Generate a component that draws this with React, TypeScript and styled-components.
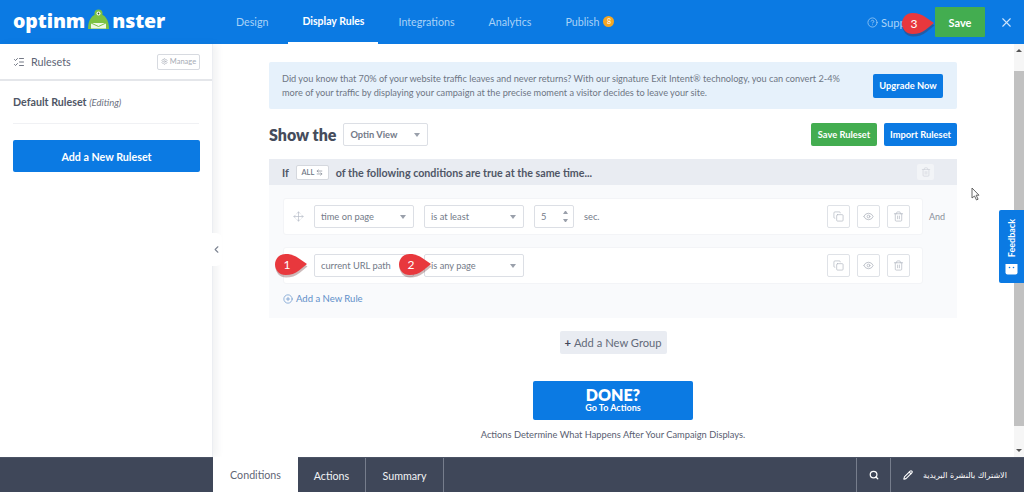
import React from 'react';
import styled, { createGlobalStyle } from 'styled-components';
import { Copy, Eye, Trash2, Move, ListChecks, Settings, ChevronLeft, X, HelpCircle, Search, Pencil, PlusCircle, ArrowLeftRight } from 'lucide-react';

const blue = '#0b7ae3';
const green = '#43ad50';
const dark = '#3f4759';
const text = '#4b5364';

const Global = createGlobalStyle`
  html, body { margin: 0; padding: 0; background: #fff; }
  * { box-sizing: border-box; }
  body { font-family: Lato, "Open Sans", sans-serif; color: ${text}; }
`;

const Page = styled.div`
  position: relative;
  width: 1024px;
  height: 492px;
  overflow: hidden;
  display: flex;
  flex-direction: column;
`;

const Header = styled.header`
  height: 44px;
  flex: none;
  background: ${blue};
  display: flex;
  align-items: stretch;
`;

const Logo = styled.div`
  width: 213px;
  padding: 0 0 2px 13px;
  display: flex;
  align-items: center;
  color: #fff;
  font: 800 19.5px/1 "Open Sans", sans-serif;
  letter-spacing: -0.1px;
`;

const MonsterSvg = styled.svg`
  flex: none;
  margin: -3px 0 0 0;
`;

const Nav = styled.nav`
  display: flex;
  align-items: stretch;
  gap: 6px;
  margin-left: 9px;
`;

const NavItem = styled.div<{ $active?: boolean }>`
  padding: 0 14px;
  display: flex;
  align-items: center;
  gap: 4px;
  font-size: ${p => (p.$active ? '10.5px' : '10.7px')};
  font-weight: ${p => (p.$active ? 700 : 400)};
  color: ${p => (p.$active ? '#fff' : '#a9d2f7')};
  border-bottom: 2px solid ${p => (p.$active ? '#fff' : 'transparent')};
`;

const Dot = styled.span`
  width: 11px;
  height: 11px;
  border-radius: 50%;
  background: #f5a623;
  color: #fff;
  font-size: 7px;
  line-height: 11px;
  text-align: center;
`;

const HeaderRight = styled.div`
  margin-left: auto;
  display: flex;
  align-items: center;
  color: #a9d2f7;
  font-size: 11.2px;
`;

const Support = styled.div`
  display: flex;
  align-items: center;
  gap: 3px;
  width: 68px;
  overflow: hidden;
`;

const SaveTop = styled.button`
  width: 50px;
  height: 30px;
  border: 0;
  padding: 0;
  background: ${green};
  color: #fff;
  font: 700 11px Lato, sans-serif;
  border-radius: 1px;
`;

const Close = styled.div`
  width: 39px;
  padding-left: 3px;
  display: flex;
  justify-content: center;
  color: #cfe5fb;
`;

const Body = styled.div`
  flex: 1;
  display: flex;
  min-height: 0;
`;

const Sidebar = styled.aside`
  width: 213px;
  flex: none;
  border-right: 1px solid #eceef2;
  box-shadow: 4px 0 7px rgba(60, 70, 90, 0.07);
  z-index: 1;
`;

const SideHead = styled.div`
  height: 37px;
  padding: 0 12px 0 13px;
  border-bottom: 2px solid #e4e6ea;
  display: flex;
  align-items: center;
  gap: 6px;
  font-size: 10.8px;
  color: #5d6474;
`;

const Manage = styled.span`
  margin-left: auto;
  width: 43px;
  height: 16px;
  border: 1px solid #d7dae0;
  border-radius: 2px;
  display: flex;
  align-items: center;
  justify-content: center;
  gap: 2px;
  font-size: 7.5px;
  color: #a7acb6;
`;

const SideBody = styled.div`
  padding: 14px 13px 0;
`;

const RulesetName = styled.div`
  box-sizing: content-box;
  height: 14px;
  padding-bottom: 14px;
  border-bottom: 1px solid #f0f1f4;
  font-size: 10.7px;
  font-weight: 700;
  line-height: 14px;
  color: #4f5666;

  em {
    font-weight: 400;
    font-size: 9.5px;
    color: #6b7180;
  }
`;

const AddRuleset = styled.button`
  display: block;
  margin-top: 16px;
  width: 187px;
  height: 32px;
  border: 0;
  border-radius: 2px;
  background: ${blue};
  color: #fff;
  font: 700 10.7px Lato, sans-serif;
`;

const Main = styled.main`
  flex: 1;
  min-width: 0;
  padding: 18px 0 0 56px;
  display: flex;
  flex-direction: column;
`;

const Content = styled.div`
  width: 688px;
  display: flex;
  flex-direction: column;
`;

const Banner = styled.div`
  height: 47px;
  padding: 0 14px 0 13px;
  background: #e6f1fb;
  border-radius: 2px;
  display: flex;
  align-items: center;
  justify-content: space-between;
  font-size: 9.2px;
  line-height: 14px;
  color: #6e7684;
`;

const Blue = styled.button<{ $w: number; $h?: number }>`
  width: ${p => p.$w}px;
  height: ${p => p.$h || 23}px;
  padding: 0;
  border: 0;
  border-radius: 2px;
  background: ${blue};
  color: #fff;
  font: 700 9.3px Lato, sans-serif;
`;

const Green = styled(Blue)`
  background: ${green};
`;

const ShowRow = styled.div`
  margin-top: 14px;
  height: 23px;
  display: flex;
  align-items: center;
  gap: 7px;
`;

const ShowLabel = styled.div`
  font-size: 16px;
  font-weight: 800;
  color: #454c5c;
`;

const Select = styled.div<{ $w: number; $noArrow?: boolean }>`
  position: relative;
  width: ${p => p.$w}px;
  height: 23px;
  padding-left: 6px;
  border: 1px solid #dcdfe5;
  border-radius: 2px;
  background: #fff;
  display: flex;
  align-items: center;
  font-size: 9.3px;
  color: #737a88;

  &::after {
    content: '';
    display: ${p => (p.$noArrow ? 'none' : 'block')};
    position: absolute;
    right: 7px;
    top: 9px;
    border: 3px solid transparent;
    border-top: 4px solid #9aa0ab;
  }
`;

const Spin = styled.span`
  position: absolute;
  right: 5px;
  top: 5px;
  height: 11px;
  width: 5px;
  display: flex;
  flex-direction: column;
  justify-content: space-between;

  &::before,
  &::after {
    content: '';
    border-left: 2.5px solid transparent;
    border-right: 2.5px solid transparent;
  }

  &::before {
    border-bottom: 3px solid #9aa0ab;
  }

  &::after {
    border-top: 3px solid #9aa0ab;
  }
`;

const Actions = styled.div`
  margin-left: auto;
  display: flex;
  gap: 7px;
`;

const GroupHead = styled.div`
  margin-top: 13px;
  height: 26px;
  padding: 0 23px 0 13px;
  background: #e9ecf2;
  display: flex;
  align-items: center;
  gap: 7px;
  font-size: 10.7px;
  font-weight: 700;
  color: #4f5666;
`;

const AllBox = styled.span`
  width: 33px;
  height: 15px;
  background: #fff;
  border: 1px solid #d5d8de;
  border-radius: 2px;
  display: flex;
  align-items: center;
  justify-content: center;
  gap: 2px;
  font-size: 7.5px;
  font-weight: 500;
  color: #6a7180;
`;

const HeadTrash = styled.span`
  margin-left: auto;
  width: 17px;
  height: 16px;
  border-radius: 2px;
  background: #f2f4f7;
  display: flex;
  align-items: center;
  justify-content: center;
  color: #cdd1d8;
`;

const GroupBody = styled.div`
  height: 133px;
  padding: 13px 14px 0;
  background: #f9fafc;
`;

const RuleLine = styled.div`
  display: flex;
  align-items: center;
  margin-bottom: 12px;
`;

const Rule = styled.div`
  flex: none;
  width: 640px;
  height: 37px;
  padding: 0 12px 0 9px;
  background: #fff;
  border: 1px solid #f3f4f7;
  border-radius: 3px;
  display: flex;
  align-items: center;
  gap: 10px;
`;

const Grip = styled.span`
  width: 11px;
  color: #b6bcc7;
  display: flex;
`;

const Unit = styled.span`
  font-size: 9.3px;
  color: #737a88;
`;

const IconGroup = styled.div`
  margin-left: auto;
  display: flex;
  gap: 7px;
`;

const IconBtn = styled.span`
  width: 23px;
  height: 23px;
  border: 1px solid #dfe2e7;
  border-radius: 2px;
  background: #fff;
  display: flex;
  align-items: center;
  justify-content: center;
  color: #b1b6c0;
`;

const AndLabel = styled.span`
  margin-left: 6px;
  font-size: 9px;
  color: #8a909b;
`;

const AddRule = styled.div`
  margin-top: -3px;
  display: flex;
  align-items: center;
  gap: 3px;
  font-size: 9.5px;
  color: #5f8fc9;
`;

const AddGroup = styled.div`
  align-self: center;
  margin-top: 13px;
  width: 107px;
  height: 23px;
  border-radius: 2px;
  background: #e9ecf2;
  display: flex;
  align-items: center;
  justify-content: center;
  gap: 3px;
  font-size: 11.2px;
  color: #636a79;

  b {
    color: #3f4759;
  }
`;

const Done = styled.button`
  align-self: center;
  margin-top: 27px;
  width: 160px;
  height: 39px;
  border: 0;
  padding: 0;
  border-radius: 2px;
  background: ${blue};
  color: #fff;
  display: flex;
  flex-direction: column;
  align-items: center;
  justify-content: center;
  font-family: Lato, sans-serif;
`;

const DoneBig = styled.span`
  font-size: 16px;
  font-weight: 800;
  line-height: 14px;
`;

const DoneSmall = styled.span`
  font-size: 9px;
  font-weight: 700;
  line-height: 11px;
`;

const Note = styled.div`
  align-self: center;
  margin-top: 9px;
  font-size: 9.3px;
  color: #596071;
`;

const Footer = styled.footer`
  height: 35px;
  flex: none;
  background: ${dark};
  padding-left: 213px;
  display: flex;
  align-items: stretch;
  border-top: 1px solid #4b5365;
  color: #fff;
  font-size: 10.7px;
  z-index: 2;
`;

const Tab = styled.div<{ $w: number; $active?: boolean }>`
  width: ${p => p.$w}px;
  margin-top: ${p => (p.$active ? '-1px' : '0')};
  display: flex;
  align-items: center;
  justify-content: center;
  background: ${p => (p.$active ? '#fff' : 'transparent')};
  color: ${p => (p.$active ? '#5f6675' : '#f2f3f5')};
  border-right: ${p => (p.$active ? '0' : '1px solid #767d8c')};
`;

const FootRight = styled.div`
  margin-left: auto;
  display: flex;
  align-items: stretch;
`;

const SearchCell = styled.div`
  width: 34px;
  border-left: 1px solid #767d8c;
  display: flex;
  align-items: center;
  justify-content: center;
`;

const TitleCell = styled.div`
  width: 134px;
  padding-left: 12px;
  border-left: 1px solid #767d8c;
  display: flex;
  align-items: center;
  gap: 10px;
`;

const ArabicTitle = styled.span`
  font: 8px "DejaVu Sans", sans-serif;
`;

const Scrollbar = styled.div`
  position: absolute;
  top: 44px;
  right: 0;
  width: 10px;
  height: 413px;
  background: #f6f6f6;
  z-index: 2;

  &::before {
    content: '';
    position: absolute;
    top: 27px;
    left: 0;
    right: 0;
    height: 355px;
    background: #c1c1c1;
  }

  &::after {
    content: '';
    position: absolute;
    left: 2px;
    top: 5px;
    border-left: 3px solid transparent;
    border-right: 3px solid transparent;
    border-bottom: 3px solid #555;
  }
`;

const ScrollDown = styled.span`
  position: absolute;
  left: 2px;
  bottom: 5px;
  border-left: 3px solid transparent;
  border-right: 3px solid transparent;
  border-top: 3px solid #555;
`;

const Collapse = styled.div`
  position: absolute;
  left: 211px;
  top: 233px;
  width: 11px;
  height: 33px;
  background: #fff;
  border-radius: 0 6px 6px 0;
  display: flex;
  align-items: center;
  color: #7d8492;
  z-index: 3;
`;

const Feedback = styled.div`
  position: absolute;
  left: 999px;
  top: 210px;
  width: 25px;
  height: 73px;
  background: ${blue};
  border-radius: 2px 0 0 2px;
  color: #fff;
  z-index: 4;
  display: flex;
  flex-direction: column;
  align-items: center;
  justify-content: flex-end;
  padding-bottom: 8px;
  gap: 6px;
`;

const FeedbackText = styled.span`
  writing-mode: vertical-rl;
  transform: rotate(180deg);
  font-size: 9px;
  font-weight: 700;
`;

const PinWrap = styled.div<{ $x: number; $y: number }>`
  position: absolute;
  left: ${p => p.$x}px;
  top: ${p => p.$y}px;
  width: 38px;
  height: 28px;
  z-index: 5;
  color: #fff;
  font-size: 12px;
`;

const PinNum = styled.span`
  position: absolute;
  left: 0;
  top: 0;
  width: 26px;
  line-height: 23px;
  text-align: center;
`;

const Cursor = styled.svg`
  position: absolute;
  left: 971px;
  top: 187px;
  z-index: 4;
`;

const Pin = ({ x, y, n }: { x: number; y: number; n: number }) => (
  <PinWrap $x={x} $y={y}>
    <svg width="38" height="28" viewBox="0 0 38 28">
      <path
        d="M11.500 1C5.500 1 1 5.800 1 11.500S5.500 22 11.500 22c5.500 0 9.500-1.500 13.500-4.500l8-6.500-8-5.500C21 2.500 17 1 11.500 1z"
        fill="#5a1a1a"
        opacity="0.3"
        transform="translate(0.5 2.5)"
      />
      <path d="M11.500 1C5.500 1 1 5.800 1 11.500S5.500 22 11.500 22c5.500 0 9.500-1.500 13.500-4.500l8-6.500-8-5.500C21 2.500 17 1 11.500 1z" fill="#e8383d" />
    </svg>
    <PinNum>{n}</PinNum>
  </PinWrap>
);

const RuleButtons = () => (
  <IconGroup>
    <IconBtn><Copy size={11} strokeWidth={1.5} /></IconBtn>
    <IconBtn><Eye size={11} strokeWidth={1.8} /></IconBtn>
    <IconBtn><Trash2 size={11} strokeWidth={1.5} /></IconBtn>
  </IconGroup>
);

const App: React.FC = () => (
  <Page>
    <Global />
    <Header>
      <Logo>
        optinm
        <MonsterSvg width="27" height="24" viewBox="0 0 25 24">
          <path d="M2 21c0-9 4-15 10.500-15S23 12 23 21z" fill="#7cc242" />
          <circle cx="12.500" cy="5.500" r="4" fill="#7cc242" />
          <circle cx="12.500" cy="5.500" r="2" fill="#fff" />
          <circle cx="12.500" cy="5.500" r="0.900" fill="#2b5a1a" />
          <path d="M5 15h15v5.500H5z" fill="#eef7e6" />
          <path d="M5 15l7.500 3.500L20 15" fill="none" stroke="#7cc242" strokeWidth="1" />
        </MonsterSvg>
        nster
      </Logo>
      <Nav>
        <NavItem>Design</NavItem>
        <NavItem $active>Display Rules</NavItem>
        <NavItem>Integrations</NavItem>
        <NavItem>Analytics</NavItem>
        <NavItem>Publish <Dot>8</Dot></NavItem>
      </Nav>
      <HeaderRight>
        <Support><HelpCircle size={11} strokeWidth={1.6} /> Support</Support>
        <SaveTop>Save</SaveTop>
        <Close><X size={15} strokeWidth={1.8} /></Close>
      </HeaderRight>
    </Header>
    <Body>
      <Sidebar>
        <SideHead>
          <ListChecks size={12} strokeWidth={1.6} color="#4f5666" />
          Rulesets
          <Manage><Settings size={7} />Manage</Manage>
        </SideHead>
        <SideBody>
          <RulesetName>Default Ruleset <em>(Editing)</em></RulesetName>
          <AddRuleset>Add a New Ruleset</AddRuleset>
        </SideBody>
      </Sidebar>
      <Main>
        <Content>
          <Banner>
            <div>
              Did you know that 70% of your website traffic leaves and never returns? With our signature Exit Intent® technology, you can convert 2-4%<br />
              more of your traffic by displaying your campaign at the precise moment a visitor decides to leave your site.
            </div>
            <Blue $w={70} $h={24}>Upgrade Now</Blue>
          </Banner>
          <ShowRow>
            <ShowLabel>Show the</ShowLabel>
            <Select $w={85}><b>Optin View</b></Select>
            <Actions>
              <Green $w={66}>Save Ruleset</Green>
              <Blue $w={73}>Import Ruleset</Blue>
            </Actions>
          </ShowRow>
          <GroupHead>
            If
            <AllBox>ALL <ArrowLeftRight size={7} /></AllBox>
            of the following conditions are true at the same time...
            <HeadTrash><Trash2 size={10} strokeWidth={1.5} /></HeadTrash>
          </GroupHead>
          <GroupBody>
            <RuleLine>
              <Rule>
                <Grip><Move size={11} strokeWidth={1.5} /></Grip>
                <Select $w={100}>time on page</Select>
                <Select $w={100}>is at least</Select>
                <Select $w={40} $noArrow>5<Spin /></Select>
                <Unit>sec.</Unit>
                <RuleButtons />
              </Rule>
              <AndLabel>And</AndLabel>
            </RuleLine>
            <RuleLine>
              <Rule>
                <Grip />
                <Select $w={100} $noArrow>current URL path</Select>
                <Select $w={100}>is any page</Select>
                <RuleButtons />
              </Rule>
            </RuleLine>
            <AddRule><PlusCircle size={10} strokeWidth={1.6} />Add a New Rule</AddRule>
          </GroupBody>
          <AddGroup><b>+</b> Add a New Group</AddGroup>
          <Done>
            <DoneBig>DONE?</DoneBig>
            <DoneSmall>Go To Actions</DoneSmall>
          </Done>
          <Note>Actions Determine What Happens After Your Campaign Displays.</Note>
        </Content>
      </Main>
    </Body>
    <Footer>
      <Tab $w={85} $active>Conditions</Tab>
      <Tab $w={68}>Actions</Tab>
      <Tab $w={78}>Summary</Tab>
      <FootRight>
        <SearchCell><Search size={10} strokeWidth={3} /></SearchCell>
        <TitleCell>
          <Pencil size={10} strokeWidth={2.6} />
          <ArabicTitle dir="rtl">الاشتراك بالنشرة البريدية</ArabicTitle>
        </TitleCell>
      </FootRight>
    </Footer>
    <Scrollbar><ScrollDown /></Scrollbar>
    <Collapse><ChevronLeft size={11} strokeWidth={2.4} /></Collapse>
    <Feedback>
      <FeedbackText>Feedback</FeedbackText>
      <svg width="13" height="12" viewBox="0 0 13 12">
        <path d="M0.500 1h12v8.500a2 2 0 0 1-2 2h-8a2 2 0 0 1-2-2z" fill="#fff" />
        <circle cx="4.500" cy="4.500" r="0.800" fill={blue} />
        <circle cx="8.500" cy="4.500" r="0.800" fill={blue} />
      </svg>
    </Feedback>
    <Cursor width="11" height="14" viewBox="0 0 11 14">
      <path d="M1 1v10l2.500-2 2 4 1.600-.8-2-4H8z" fill="#fff" stroke="#555" strokeWidth="0.900" />
    </Cursor>
    <Pin x={274} y={253} n={1} />
    <Pin x={398} y={253} n={2} />
    <Pin x={901} y={12} n={3} />
  </Page>
);

export default App;
